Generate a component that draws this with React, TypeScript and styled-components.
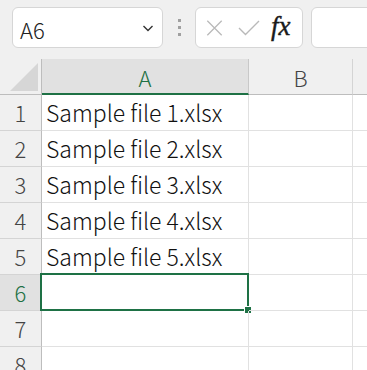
import React from "react";
import styled, { createGlobalStyle } from "styled-components";

const GlobalStyle = createGlobalStyle`
  html, body {
    margin: 0;
    padding: 0;
    background: #ffffff;
    overflow: hidden;
  }
  body {
    font-family: "Noto Sans CJK JP", "Noto Sans", sans-serif;
  }
`;

const GREEN = "#1e7145";
const GRID = "#e1e1e1";

const rows = [
  "Sample file 1.xlsx",
  "Sample file 2.xlsx",
  "Sample file 3.xlsx",
  "Sample file 4.xlsx",
  "Sample file 5.xlsx",
  "",
  "",
  "",
];

export default function App() {
  return (
    <>
      <GlobalStyle />
      <Page>
        <Toolbar>
          <NameBox>
            <NameText>A6</NameText>
            <Chevron viewBox="0 0 16 16">
              <path d="M3.5 6 L8 10.5 L12.5 6" fill="none" stroke="#333" strokeWidth="1.4" />
            </Chevron>
          </NameBox>
          <Grip>
            <Dot />
            <Dot />
            <Dot />
          </Grip>
          <FormulaButtons>
            <ToolIcon viewBox="0 0 20 20">
              <path d="M2 2 L18 18 M18 2 L2 18" stroke="#b9b9b9" strokeWidth="1.4" fill="none" />
            </ToolIcon>
            <CheckIcon viewBox="0 0 22 18">
              <path d="M1 9 L7.5 15.5 L21 2" stroke="#b9b9b9" strokeWidth="1.4" fill="none" />
            </CheckIcon>
            <Fx>fx</Fx>
          </FormulaButtons>
          <FormulaInput />
        </Toolbar>

        <Sheet>
          <HeaderRow>
            <Corner>
              <CornerTriangle viewBox="0 0 28 28">
                <polygon points="28,0 28,28 0,28" fill="#d6d6d6" />
              </CornerTriangle>
            </Corner>
            <ColHeader $width={207} $active>A</ColHeader>
            <ColHeader $width={104}>B</ColHeader>
            <ColHeader $width={60} />
          </HeaderRow>
          {rows.map((text, i) => {
            const active = i === 5;
            return (
              <Row key={i}>
                <RowHeader $active={active}>{i + 1}</RowHeader>
                <Cell $width={207}>
                  {text}
                  {active && (
                    <Selection>
                      <FillHandle />
                    </Selection>
                  )}
                </Cell>
                <Cell $width={104} />
                <Cell $width={60} />
              </Row>
            );
          })}
        </Sheet>
      </Page>
    </>
  );
}

const Page = styled.div`
  width: 367px;
  height: 370px;
  overflow: hidden;
  background: #ffffff;
`;

const Toolbar = styled.div`
  display: flex;
  align-items: flex-start;
  height: 59px;
  padding: 7px 0 0 12px;
  box-sizing: border-box;
  background: #f0f0f0;
  overflow: hidden;
`;

const Box = styled.div`
  height: 41px;
  box-sizing: border-box;
  background: #ffffff;
  border: 1px solid #d6d6d6;
  border-radius: 6px;
  flex-shrink: 0;
`;

const NameBox = styled(Box)`
  width: 151px;
  display: flex;
  align-items: center;
  justify-content: space-between;
  padding: 0 6px 0 7px;
`;

const NameText = styled.span`
  font-size: 22px;
  font-weight: 300;
  color: #222;
  line-height: 1;
  padding-top: 3px;
`;

const Chevron = styled.svg`
  width: 16px;
  height: 16px;
`;

const Grip = styled.div`
  width: 32px;
  height: 41px;
  display: flex;
  flex-direction: column;
  align-items: center;
  justify-content: center;
  gap: 4px;
  flex-shrink: 0;
`;

const Dot = styled.div`
  width: 3px;
  height: 3px;
  background: #a0a0a0;
`;

const FormulaButtons = styled(Box)`
  width: 108px;
  display: flex;
  align-items: center;
  padding: 0 0 0 9px;
  gap: 14px;
`;

const ToolIcon = styled.svg`
  width: 19px;
  height: 18px;
`;

const CheckIcon = styled.svg`
  width: 22px;
  height: 18px;
`;

const Fx = styled.span`
  font-family: "Liberation Serif", "DejaVu Serif", serif;
  font-style: italic;
  font-weight: normal;
  font-size: 27px;
  color: #1a1a1a;
  -webkit-text-stroke: 0.4px #1a1a1a;
  margin-left: -3px;
  padding-bottom: 3px;
`;

const FormulaInput = styled(Box)`
  width: 120px;
  margin-left: 8px;
`;

const Sheet = styled.div`
  display: flex;
  flex-direction: column;
`;

const HeaderRow = styled.div`
  display: flex;
  height: 36px;
  background: #f0f0f0;
`;

const Corner = styled.div`
  width: 42px;
  height: 36px;
  box-sizing: border-box;
  border-right: 1px solid #bdbdbd;
  border-bottom: 1px solid #bdbdbd;
  display: flex;
  align-items: flex-end;
  justify-content: flex-end;
  padding: 0 3px 3px 0;
  flex-shrink: 0;
`;

const CornerTriangle = styled.svg`
  width: 28px;
  height: 28px;
`;

const ColHeader = styled.div<{ $width: number; $active?: boolean }>`
  width: ${(p) => p.$width}px;
  flex-shrink: 0;
  height: 36px;
  box-sizing: border-box;
  display: flex;
  align-items: center;
  justify-content: center;
  font-size: 22px;
  font-weight: 300;
  padding-top: 1px;
  background: ${(p) => (p.$active ? "#e1e1e1" : "#f0f0f0")};
  color: ${(p) => (p.$active ? GREEN : "#444")};
  border-right: 1px solid ${(p) => (p.$active ? "#c8c8c8" : "#d4d4d4")};
  border-bottom: ${(p) => (p.$active ? `2px solid ${GREEN}` : "1px solid #bdbdbd")};
`;

const Row = styled.div`
  display: flex;
  height: 36px;
`;

const RowHeader = styled.div<{ $active?: boolean }>`
  width: 42px;
  flex-shrink: 0;
  box-sizing: border-box;
  display: flex;
  align-items: center;
  justify-content: center;
  font-size: 22px;
  font-weight: 300;
  padding-bottom: 1px;
  background: ${(p) => (p.$active ? "#e1e1e1" : "#f0f0f0")};
  color: ${(p) => (p.$active ? GREEN : "#444")};
  border-right: 1px solid #bdbdbd;
  border-bottom: 1px solid #d4d4d4;
`;

const Cell = styled.div<{ $width: number }>`
  position: relative;
  width: ${(p) => p.$width}px;
  flex-shrink: 0;
  box-sizing: border-box;
  display: flex;
  align-items: center;
  padding: 0 0 2px 4px;
  font-size: 23px;
  font-weight: 300;
  color: #111;
  white-space: nowrap;
  border-right: 1px solid ${GRID};
  border-bottom: 1px solid ${GRID};
`;

const Selection = styled.div`
  position: absolute;
  top: -2px;
  left: -2px;
  right: -1px;
  bottom: -1px;
  border: 2px solid ${GREEN};
`;

const FillHandle = styled.div`
  position: absolute;
  right: -5px;
  bottom: -5px;
  width: 6px;
  height: 6px;
  background: ${GREEN};
  border: 1px solid #ffffff;
`;
